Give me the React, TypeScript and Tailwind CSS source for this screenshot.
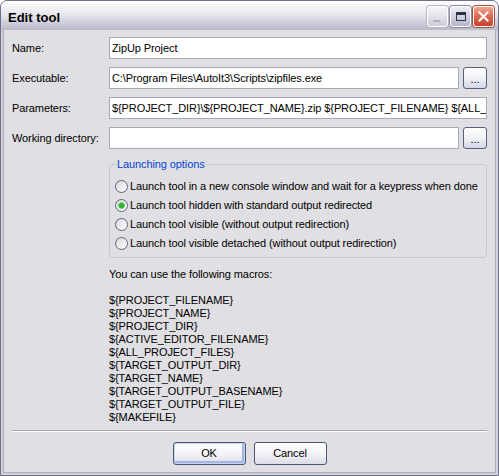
import React from 'react';

const macros = [
  '${PROJECT_FILENAME}',
  '${PROJECT_NAME}',
  '${PROJECT_DIR}',
  '${ACTIVE_EDITOR_FILENAME}',
  '${ALL_PROJECT_FILES}',
  '${TARGET_OUTPUT_DIR}',
  '${TARGET_NAME}',
  '${TARGET_OUTPUT_BASENAME}',
  '${TARGET_OUTPUT_FILE}',
  '${MAKEFILE}',
];

const options = [
  'Launch tool in a new console window and wait for a keypress when done',
  'Launch tool hidden with standard output redirected',
  'Launch tool visible (without output redirection)',
  'Launch tool visible detached (without output redirection)',
];

function TextBox({ value }: { value?: string }) {
  return (
    <div className="flex-1 h-[22px] bg-white border border-[#a5acb8] pl-[2px] flex items-center overflow-hidden whitespace-nowrap">
      {value}
    </div>
  );
}

function BrowseButton() {
  return (
    <div className="w-[24px] h-[22px] shrink-0 rounded-[3px] border border-[#566079] bg-linear-to-b from-white via-[#f1f2f7] to-[#d3d6e4] flex items-end justify-center pb-[3px] leading-none">
      ...
    </div>
  );
}

function Row({ label, value, browse }: { label: string; value?: string; browse?: boolean }) {
  return (
    <div className="flex items-center">
      <div className="w-[97px] shrink-0">{label}</div>
      <TextBox value={value} />
      {browse && <div className="w-[4px] shrink-0" />}
      {browse && <BrowseButton />}
    </div>
  );
}

function Radio({ label, checked }: { label: string; checked?: boolean }) {
  return (
    <div className="h-[19px] flex items-center gap-[2px]">
      <div className="w-[13px] h-[13px] rounded-full border border-[#5a647c] bg-linear-to-br from-[#d8d8de] to-white flex items-center justify-center">
        {checked && <div className="w-[5px] h-[5px] rounded-full bg-[#2fae2f] shadow-[0_0_0_1px_#7bd67b]" />}
      </div>
      <span className="whitespace-nowrap">{label}</span>
    </div>
  );
}

function PushButton({ label, isDefault }: { label: string; isDefault?: boolean }) {
  return (
    <div
      className={
        isDefault
          ? 'w-[73px] h-[23px] rounded-[3px] border border-[#4c5670] bg-linear-to-b from-white via-[#f4f4f7] to-[#dcdde6] shadow-[inset_0_0_0_1px_#c6d3f2,inset_-1px_-1px_0_2px_#a3b6e4] flex items-center justify-center'
          : 'w-[73px] h-[23px] rounded-[3px] border border-[#4c5670] bg-linear-to-b from-white via-[#f4f4f7] to-[#dcdde6] flex items-center justify-center'
      }
    >
      {label}
    </div>
  );
}

export default function App() {
  return (
    <div className="w-[499px] h-[476px] flex flex-col rounded-t-[7px] border border-[#6f6f88] bg-[#d2d2de] overflow-hidden font-['Liberation_Sans',Arial,sans-serif] text-[11px] leading-[13px] tracking-[-0.1px] text-black">
      {/* title bar */}
      <div className="h-[29px] shrink-0 flex items-start bg-linear-to-b from-[#fdfdfe] via-[#e3e3eb] to-[#b9b9ca] border-t border-white">
        <div className="pl-[7px] pt-[8px] text-[13px] leading-[15px] font-bold tracking-normal">Edit tool</div>
        <div className="ml-auto flex gap-[2px] pt-[4px] pr-[4px]">
          <div className="w-[21px] h-[21px] rounded-[3px] border border-white bg-linear-to-b from-[#f6f6f9] to-[#cdcdd9] shadow-[0_0_0_1px_#b4b4c4] flex items-end pl-[5px] pb-[4px]">
            <div className="w-[7px] h-[2px] bg-[#b0b0c0]" />
          </div>
          <div className="w-[21px] h-[21px] rounded-[3px] border border-white bg-linear-to-b from-[#eeeef5] to-[#b5b5ca] shadow-[0_0_0_1px_#8a8aa4] flex items-center justify-center">
            <div className="w-[10px] h-[9px] border border-[#2f2f48] border-t-[3px]" />
          </div>
          <div className="w-[21px] h-[21px] rounded-[3px] border border-white bg-linear-to-b from-[#eea590] via-[#dc6953] to-[#c4432e] shadow-[0_0_0_1px_#a4503f] flex items-center justify-center">
            <svg width="11" height="11" viewBox="0 0 11 11">
              <path d="M1.5 1.5 L9.5 9.5 M9.5 1.5 L1.5 9.5" stroke="white" strokeWidth="2" strokeLinecap="square" />
            </svg>
          </div>
        </div>
      </div>

      {/* frame + body */}
      <div className="flex-1 flex flex-col px-[2px] pb-[2px]">
        <div className="flex-1 flex flex-col bg-[#e0dfe3] border-x border-b border-[#aeaebf] pl-[8px] pr-[8px] pt-[7px] pb-[7px]">
          <div className="flex flex-col gap-[8px]">
            <Row label="Name:" value="ZipUp Project" />
            <Row label="Executable:" value={'C:\\Program Files\\AutoIt3\\Scripts\\zipfiles.exe'} browse />
            <Row
              label="Parameters:"
              value={'${PROJECT_DIR}\\${PROJECT_NAME}.zip ${PROJECT_FILENAME} ${ALL_PROJECT_FILES}'}
            />
            <Row label="Working directory:" browse />
          </div>

          <div className="ml-[97px] mt-[9px]">
            <fieldset className="border border-[#c6c6ce] rounded-[4px] px-[5px] pb-[4px]">
              <legend className="ml-[1px] px-[1px] text-[#0046d5]">Launching options</legend>
              <div className="pt-[6px] flex flex-col">
                {options.map((o, i) => (
                  <Radio key={o} label={o} checked={i === 1} />
                ))}
              </div>
            </fieldset>

            <div className="mt-[10px]">You can use the following macros:</div>
            <div className="mt-[13px] flex flex-col">
              {macros.map((m) => (
                <div key={m}>{m}</div>
              ))}
            </div>
          </div>

          <div className="mt-auto border-t border-[#a7a6aa] border-b border-b-white" />
          <div className="mt-[10px] flex justify-center gap-[8px]">
            <PushButton label="OK" isDefault />
            <PushButton label="Cancel" />
          </div>
        </div>
      </div>
    </div>
  );
}
